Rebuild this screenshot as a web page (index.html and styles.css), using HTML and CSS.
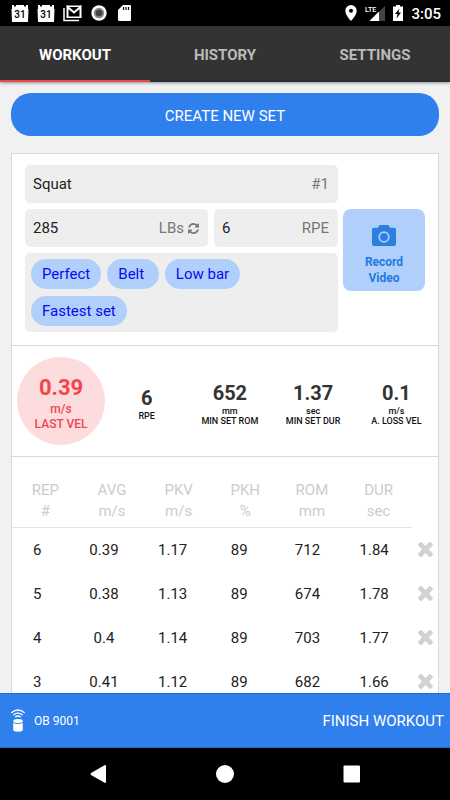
FILE: index.html
```html
<!DOCTYPE html>
<html lang="en">
<head>
<meta charset="utf-8">
<meta name="viewport" content="width=device-width, initial-scale=1">
<title>Workout</title>
<link rel="stylesheet" href="styles.css">
</head>
<body>
<svg class="defs" aria-hidden="true">
  <symbol id="times" viewBox="302 366 1188 1188"><path d="M1490 1322q0 40-28 68l-136 136q-28 28-68 28t-68-28l-294-294-294 294q-28 28-68 28t-68-28l-136-136q-28-28-28-68t28-68l294-294-294-294q-28-28-28-68t28-68l136-136q28-28 68-28t68 28l294 294 294-294q28-28 68-28t68 28l136 136q28 28 28 68t-28 68l-294 294 294 294q28 28 28 68z"/></symbol>
</svg>

<header class="status">
  <div class="status-group">
    <svg width="18" height="18" viewBox="0 0 18 18"><path fill="#fff" d="M1 1h2v1.500h2V1h8v1.500h2V1h2v4h.500L17 18H1L.500 5H1z"/><path fill="#000" d="M3 .500h2v1.500H3zM13 .500h2v1.500h-2z"/><text class="day" x="9" y="14" text-anchor="middle">31</text></svg>
    <svg width="18" height="18" viewBox="0 0 18 18"><path fill="#fff" d="M1 1h2v1.500h2V1h8v1.500h2V1h2v4h.500L17 18H1L.500 5H1z"/><path fill="#000" d="M3 .500h2v1.500H3zM13 .500h2v1.500h-2z"/><text class="day" x="9" y="14" text-anchor="middle">31</text></svg>
    <svg width="19" height="18" viewBox="0 0 19 18" fill="none" stroke="#fff"><path stroke-width="1.500" d="M1 4v12.500h15"/><path stroke-width="2" d="M4.500 13V3l6.500 5.500L17.500 3v10"/><path stroke-width="1.500" d="M3.500 13.200h15M4 2.200h14"/></svg>
    <svg width="20" height="16" viewBox="0 0 20 16"><circle cx="9" cy="8" r="7.700" fill="#fff"/><circle cx="9" cy="8" r="5.200" fill="#888"/><circle cx="9" cy="8" r="3.300" fill="#444"/></svg>
    <svg width="13" height="16" viewBox="0 0 13 16"><path fill="#fff" d="M5 0h7q1 0 1 1v14q0 1-1 1H1q-1 0-1-1V5z"/><path stroke="#000" stroke-width="1.200" d="M5.500 2v3M8 2v3M10.500 2v3"/></svg>
  </div>
  <div class="status-group">
    <svg width="12" height="16" viewBox="0 0 12 16"><path fill="#fff" fill-rule="evenodd" d="M6 0a5.700 5.700 0 0 1 5.700 5.700C11.700 10 6 16 6 16S.300 10 .300 5.700A5.700 5.700 0 0 1 6 0zm0 3.700a2 2 0 1 0 0 4 2 2 0 0 0 0-4z"/></svg>
    <svg width="20" height="17" viewBox="0 0 20 17"><path fill="#444" d="M20 1v15H4z"/><path fill="#fff" d="M14 6.500V16H4.500z"/><path fill="#000" d="M0 0h12v7.500H0z"/><text class="lte" x="0" y="7" fill="#fff">LTE</text></svg>
    <svg width="10" height="16" viewBox="0 0 10 16"><path fill="#fff" d="M3 0h4v1.500h3V16H0V1.500h3z"/><path d="M6.500 3.500L2 9h2.500l-1 4.500L8 7.500H5.500z"/></svg>
    <time class="clock">3:05</time>
  </div>
</header>

<nav class="tabs">
  <a class="tab active" href="#workout">WORKOUT</a>
  <a class="tab" href="#history">HISTORY</a>
  <a class="tab" href="#settings">SETTINGS</a>
</nav>

<main class="content">
  <button class="create">CREATE NEW SET</button>
  <article class="card">
    <section class="details">
      <div class="fields">
        <label class="field wide"><input type="text" value="Squat" aria-label="Exercise"><span class="hint">#1</span></label>
        <div class="field"><input type="text" value="285" aria-label="Weight"><button class="unit">LBs<svg width="11" height="11" viewBox="128 128 1536 1536"><path d="M1639 1056q0 5-1 7-64 268-268 434.500t-478 166.500q-146 0-282.500-55t-243.500-157l-129 129q-19 19-45 19t-45-19-19-45v-448q0-26 19-45t45-19h448q26 0 45 19t19 45-19 45l-137 137q71 66 161 102t187 36q134 0 250-65t186-179q11-17 53-117 8-23 30-23h192q13 0 22.500 9.500t9.500 22.500zm25-800v448q0 26-19 45t-45 19h-448q-26 0-45-19t-19-45 19-45l138-138q-148-137-349-137-134 0-250 65t-186 179q-11 17-53 117-8 23-30 23h-199q-13 0-22.500-9.500t-9.500-22.500v-7q65-268 270-434.500t480-166.500q146 0 284 55.500t245 156.500l130-129q19-19 45-19t45 19 19 45z"/></svg></button></div>
        <label class="field"><input type="text" value="6" aria-label="RPE"><span class="hint">RPE</span></label>
        <ul class="tags">
          <li>Perfect</li>
          <li>Belt </li>
          <li>Low bar</li>
          <li>Fastest set</li>
        </ul>
      </div>
      <button class="record">
        <svg width="24" height="21" viewBox="0 0 24 21"><path fill="#2c7fe0" d="M8.500 0h7q1 0 1.600 1l1 1.800H22q2 0 2 2V19q0 2-2 2H2q-2 0-2-2V4.800q0-2 2-2h3.900l1-1.800Q7.500 0 8.500 0z"/><circle cx="12" cy="12" r="4.800" fill="none" stroke="#b0d0fb" stroke-width="1.700"/></svg>
        <span>Record<br>Video</span>
      </button>
    </section>

    <section class="stats">
      <div class="stat last"><strong>0.39</strong><span>m/s</span><span>LAST VEL</span></div>
      <div class="stat"><strong>6</strong><span>RPE</span></div>
      <div class="stat"><strong>652</strong><span>mm</span><span>MIN SET ROM</span></div>
      <div class="stat"><strong>1.37</strong><span>sec</span><span>MIN SET DUR</span></div>
      <div class="stat"><strong>0.1</strong><span>m/s</span><span>A. LOSS VEL</span></div>
    </section>

    <table class="reps">
      <colgroup><col span="6"><col class="remove-col"></colgroup>
      <thead>
        <tr><th>REP<br>#</th><th>AVG<br>m/s</th><th>PKV<br>m/s</th><th>PKH<br>%</th><th>ROM<br>mm</th><th>DUR<br>sec</th><td></td></tr>
      </thead>
      <tbody>
        <tr><td>6</td><td>0.39</td><td>1.17</td><td>89</td><td>712</td><td>1.84</td><td><button class="remove" aria-label="Remove rep 6"><svg width="15" height="15"><use href="#times"/></svg></button></td></tr>
        <tr><td>5</td><td>0.38</td><td>1.13</td><td>89</td><td>674</td><td>1.78</td><td><button class="remove" aria-label="Remove rep 5"><svg width="15" height="15"><use href="#times"/></svg></button></td></tr>
        <tr><td>4</td><td>0.4</td><td>1.14</td><td>89</td><td>703</td><td>1.77</td><td><button class="remove" aria-label="Remove rep 4"><svg width="15" height="15"><use href="#times"/></svg></button></td></tr>
        <tr><td>3</td><td>0.41</td><td>1.12</td><td>89</td><td>682</td><td>1.66</td><td><button class="remove" aria-label="Remove rep 3"><svg width="15" height="15"><use href="#times"/></svg></button></td></tr>
      </tbody>
    </table>
  </article>
</main>

<footer class="bottom">
  <button class="device">
    <svg width="14" height="23" viewBox="0 0 14 23"><g fill="none" stroke="#fff" stroke-width="1.400" stroke-linecap="round"><path d="M.800 3.500q6.200-5 12.400 0M2.800 5.700q4.200-3.200 8.400 0M4.800 7.700q2.200-1.500 4.400 0"/></g><ellipse cx="7" cy="12" rx="4.800" ry="2" fill="#fff"/><path fill="#fff" d="M2.200 14q4.800 2 9.600 0v6.500q0 2.200-4.800 2.200t-4.800-2.200z"/></svg>
    OB 9001
  </button>
  <button class="finish">FINISH WORKOUT</button>
</footer>

<nav class="system">
  <button aria-label="Back"><svg width="18" height="18" viewBox="0 0 18 18"><path fill="#fff" d="M16 0q1 0 1 1v16q0 1-1 1L2 10q-1-1 0-2z"/></svg></button>
  <button aria-label="Home"><svg width="18" height="18" viewBox="0 0 18 18"><circle cx="9" cy="9" r="9" fill="#fff"/></svg></button>
  <button aria-label="Overview"><svg width="18" height="18" viewBox="0 0 18 18"><rect x=".500" y=".500" width="16.500" height="17" rx="1" fill="#fff"/></svg></button>
</nav>
</body>
</html>
```

FILE: styles.css
```css
* {
  box-sizing: border-box;
}

body {
  margin: 0;
  height: 100vh;
  display: flex;
  flex-direction: column;
  overflow: hidden;
  background: #f1f1f1;
  color: #222;
  font-family: Roboto, sans-serif;
  font-size: 15px;
}

button,
input {
  font: inherit;
  color: inherit;
  border: 0;
  padding: 0;
  background: none;
}

svg {
  display: block;
  flex: none;
}

.defs {
  position: absolute;
  width: 0;
  height: 0;
}

.status {
  flex: none;
  height: 26px;
  padding: 0 9px 0 11px;
  display: flex;
  align-items: center;
  justify-content: space-between;
  background: #000;
  color: #fff;
}

.status-group {
  display: flex;
  align-items: center;
  gap: 8px;
}

.day {
  font-size: 10px;
  font-weight: 500;
}

.lte {
  font-size: 7px;
  font-weight: 500;
}

.clock {
  padding-top: 2px;
  font-weight: 500;
  line-height: 26px;
}

.tabs {
  flex: none;
  height: 56px;
  display: flex;
  background: #333;
  box-shadow: 0 1px 3px rgba(0, 0, 0, 0.4);
  position: relative;
}

.tab {
  flex: 1;
  display: flex;
  align-items: center;
  justify-content: center;
  padding-top: 4px;
  border-bottom: 2px solid #263032;
  color: #bbb;
  font-weight: 700;
  text-decoration: none;
}

.tab.active {
  border-color: #e8484c;
  color: #fff;
}

.content {
  flex: 1;
  min-height: 0;
  overflow-y: auto;
  scrollbar-width: none;
  padding: 11px 11px 0;
}

.create {
  display: block;
  width: 100%;
  height: 43px;
  padding-top: 2px;
  border-radius: 20px;
  background: #2f80ed;
  color: #fff;
}

.card {
  margin-top: 17px;
  border: 1px solid #d9d9d9;
  background: #fff;
}

.details {
  display: flex;
  gap: 5px;
  padding: 11px 13px 13px;
  border-bottom: 1px solid #d9d9d9;
}

.fields {
  flex: 1;
  min-width: 0;
  display: grid;
  grid-template-columns: 183fr 124fr;
  gap: 6px;
}

.field {
  height: 38px;
  min-width: 0;
  display: flex;
  align-items: center;
  padding: 0 9px 0 8px;
  border-radius: 5px;
  background: #eee;
}

.field input {
  flex: 1;
  width: 0;
  min-width: 0;
}

.wide,
.tags {
  grid-column: 1 / -1;
}

.hint,
.unit {
  color: #777;
}

.unit {
  display: flex;
  align-items: center;
  gap: 4px;
  fill: #777;
}

.tags {
  display: flex;
  flex-wrap: wrap;
  gap: 7px 6px;
  margin: 0;
  padding: 6px;
  border-radius: 5px;
  background: #eee;
  list-style: none;
}

.tags li {
  height: 30px;
  padding: 0 11px;
  border-radius: 15px;
  background: #b0d0fb;
  color: #0a0af0;
  line-height: 31px;
  white-space: pre;
}

.record {
  width: 82px;
  height: 82px;
  margin-top: 44px;
  padding-top: 12px;
  display: flex;
  flex-direction: column;
  align-items: center;
  gap: 8px;
  border-radius: 8px;
  background: #b0d0fb;
  color: #1f7ae0;
  font-size: 12px;
  font-weight: 700;
  line-height: 16px;
}

.record svg {
  margin-top: 4px;
}

.stats {
  display: grid;
  grid-template-columns: 88px repeat(4, 1fr);
  align-items: center;
  padding: 11px 0 11px 5px;
  border-bottom: 1px solid #d9d9d9;
}

.stat {
  display: flex;
  flex-direction: column;
  align-items: center;
  padding-top: 4px;
  color: #111;
  font-size: 9px;
  font-weight: 500;
  line-height: 10px;
  white-space: nowrap;
}

.stat strong {
  color: #333;
  font-size: 20px;
  font-weight: 700;
  line-height: 26px;
}

.stat.last {
  height: 88px;
  justify-content: center;
  border-radius: 50%;
  background: #fddcdd;
  color: #f2454c;
  font-size: 12px;
  line-height: 15px;
}

.stat.last strong {
  color: inherit;
  font-size: 22px;
  line-height: 28px;
}

.reps {
  width: 100%;
  margin-top: 23px;
  border-collapse: collapse;
  table-layout: fixed;
  text-align: center;
}

.remove-col {
  width: 26px;
}

.reps th {
  height: 47px;
  padding: 0 0 5px;
  border-bottom: 1px solid #e2e2e2;
  color: #ccc;
  font-weight: 400;
  line-height: 21px;
}

.reps td {
  height: 44px;
  padding: 0 16px 0 0;
}

.reps td:nth-child(n + 3) {
  padding-right: 12px;
}

.reps td:nth-child(n + 5) {
  padding-right: 9px;
}

.reps td:last-child {
  padding: 0;
}

.remove {
  display: block;
  margin: 0 auto;
  fill: #d2d2d2;
}

.bottom {
  flex: none;
  height: 55px;
  display: flex;
  align-items: center;
  justify-content: space-between;
  padding: 0 6px 0 11px;
  border-top: 1px solid #1f6bd0;
  border-bottom: 1px solid #1f6bd0;
  background: #2f80ed;
  color: #fff;
}

.device {
  display: flex;
  align-items: center;
  gap: 9px;
  font-size: 12px;
}

.system {
  flex: none;
  height: 52px;
  display: flex;
  align-items: center;
  justify-content: center;
  gap: 109px;
  background: #000;
}
```
